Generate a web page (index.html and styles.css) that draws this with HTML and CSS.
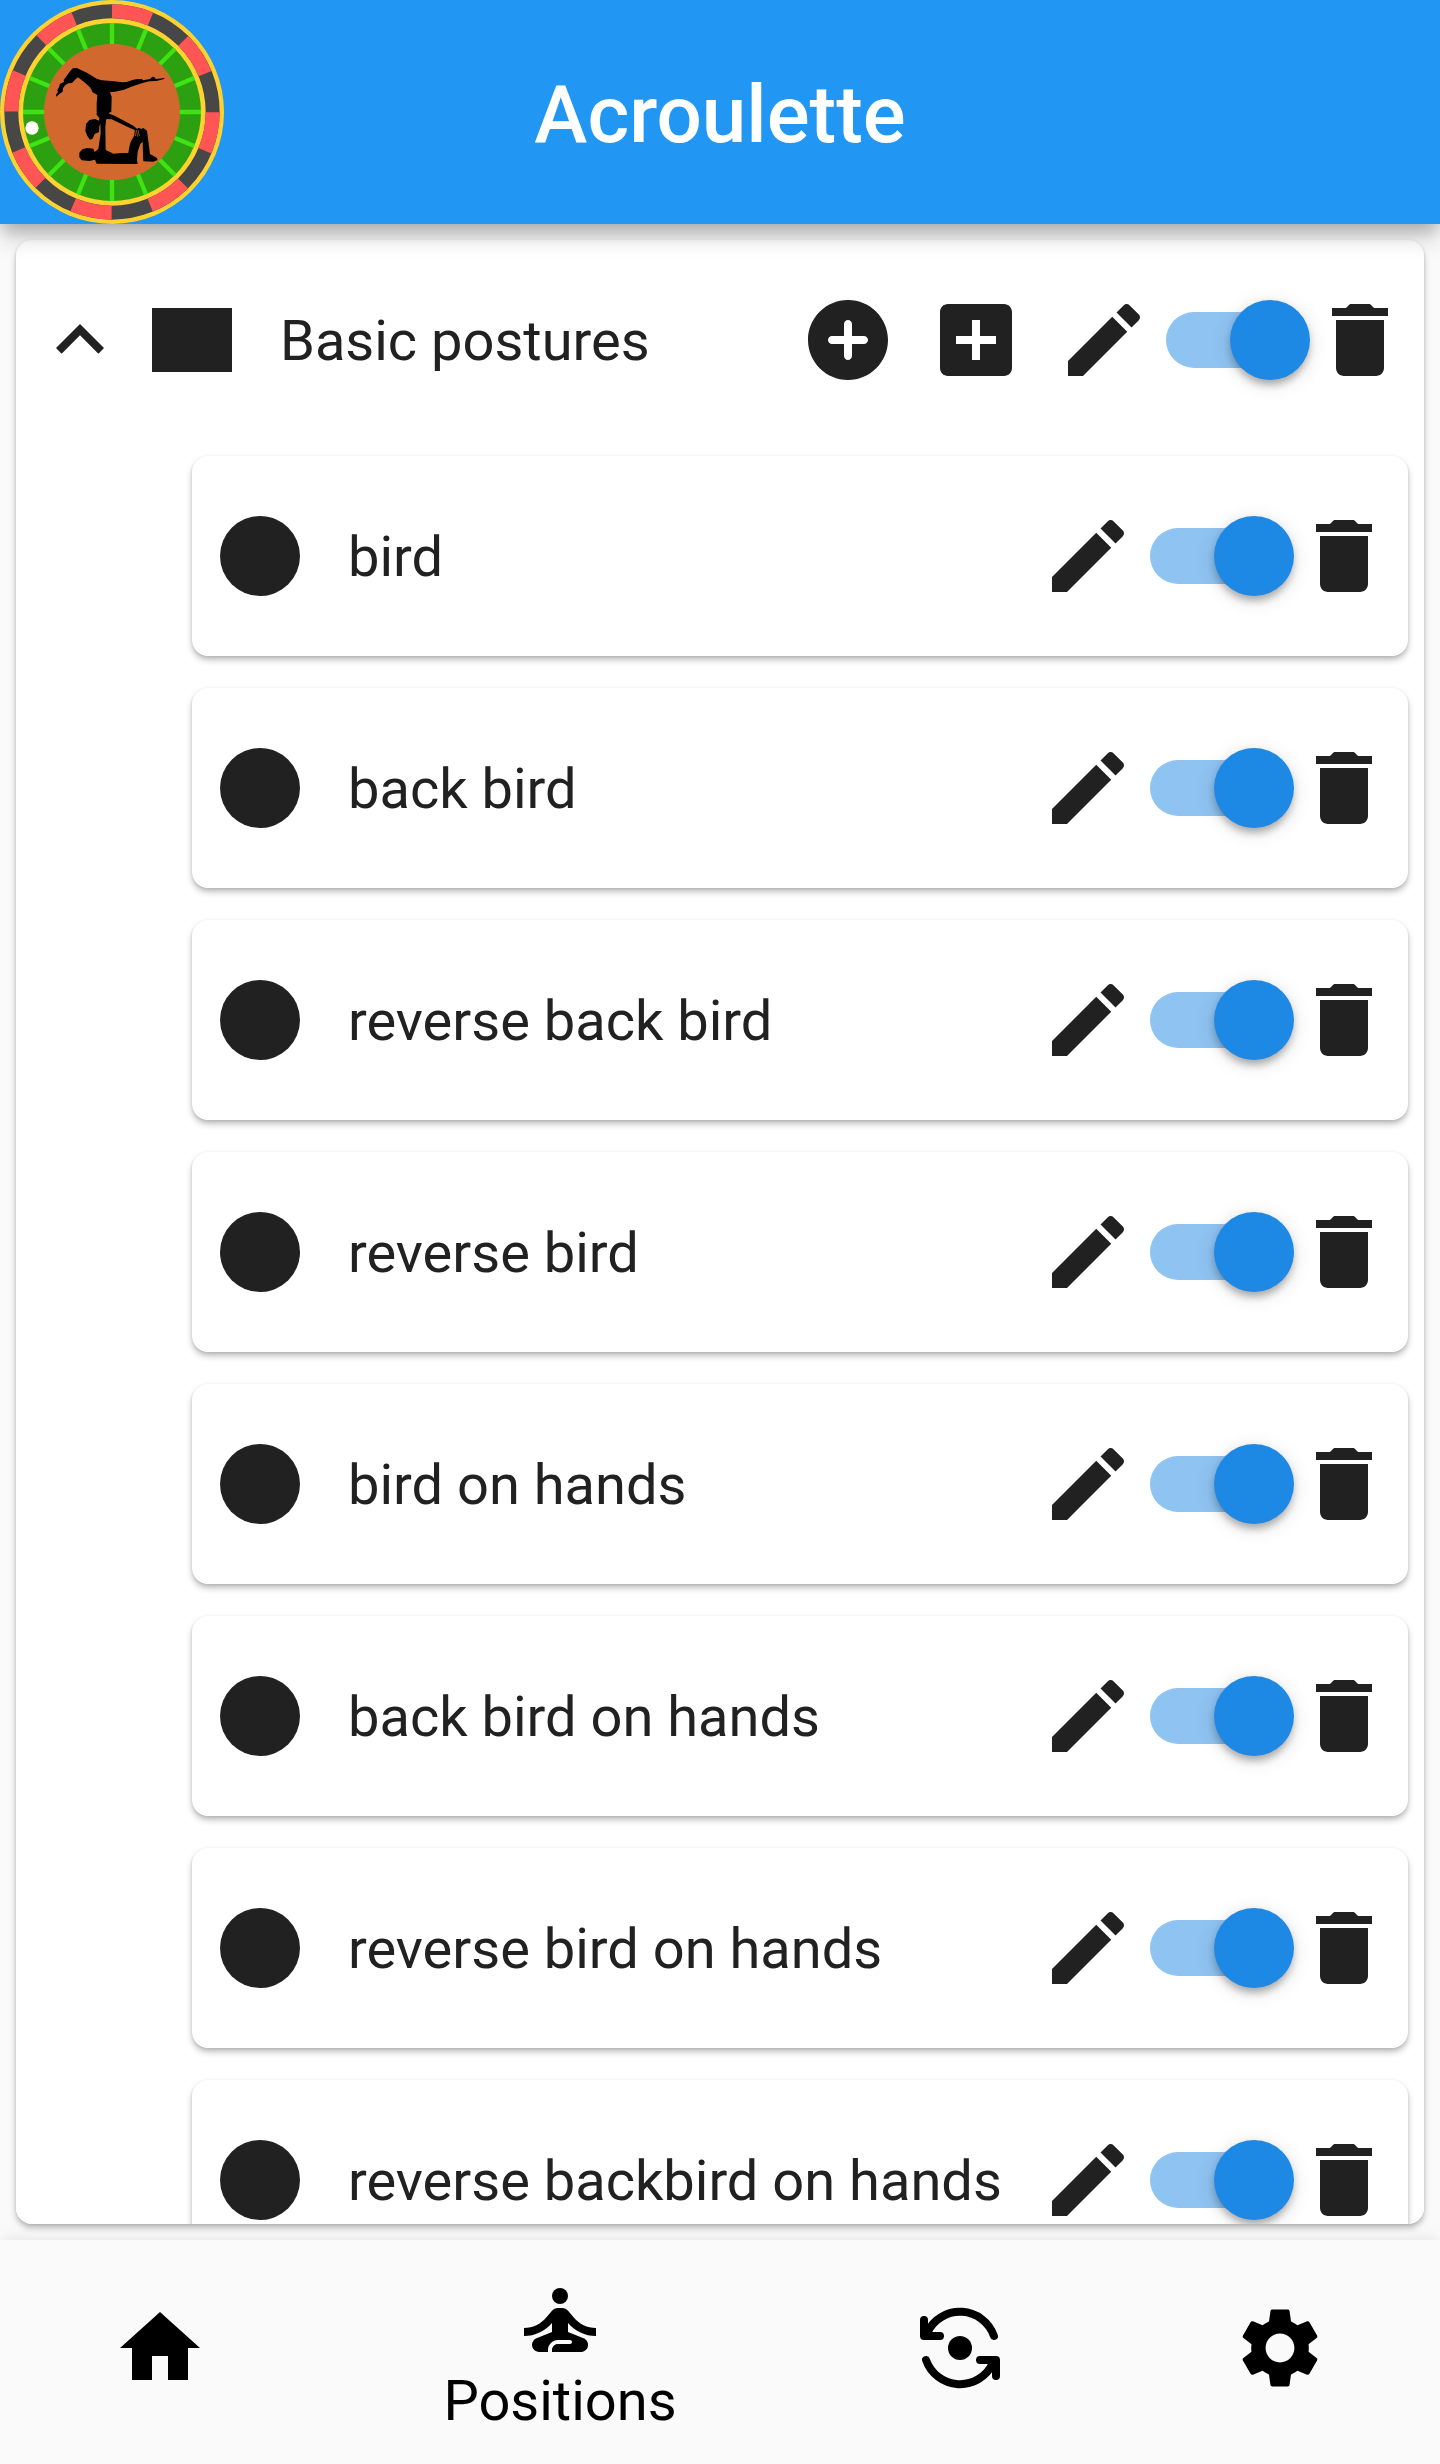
FILE: index.html
```html
<!DOCTYPE html>
<html lang="en">
<head>
<meta charset="utf-8">
<meta name="viewport" content="width=device-width, initial-scale=1">
<title>Acroulette</title>
<link rel="stylesheet" href="styles.css">
</head>
<body>
<svg class="sprite" aria-hidden="true">
  <symbol id="i-less" viewBox="0 0 24 24"><path d="M12 8l-6 6 1.41 1.41L12 10.83l4.59 4.58L18 14z"/></symbol>
  <symbol id="i-rect" viewBox="0 0 24 24"><path d="M2 4h20v16H2z"/></symbol>
  <symbol id="i-circle" viewBox="0 0 24 24"><circle cx="12" cy="12" r="10"/></symbol>
  <symbol id="i-add-circle" viewBox="0 0 24 24"><path d="M12 2C6.48 2 2 6.48 2 12s4.48 10 10 10 10-4.48 10-10S17.52 2 12 2zm4 11h-3v3c0 .55-.45 1-1 1s-1-.45-1-1v-3H8c-.55 0-1-.45-1-1s.45-1 1-1h3V8c0-.55.45-1 1-1s1 .45 1 1v3h3c.55 0 1 .45 1 1s-.45 1-1 1z"/></symbol>
  <symbol id="i-add-box" viewBox="0 0 24 24"><path d="M19 3H5c-1.11 0-2 .9-2 2v14c0 1.1.89 2 2 2h14c1.1 0 2-.9 2-2V5c0-1.1-.9-2-2-2zm-2 10h-4v4h-2v-4H7v-2h4V7h2v4h4v2z"/></symbol>
  <symbol id="i-edit" viewBox="0 0 24 24"><path d="M3 17.25V21h3.75L17.81 9.94l-3.75-3.75L3 17.25zM20.71 7.04c.39-.39.39-1.02 0-1.41l-2.34-2.34c-.39-.39-1.02-.39-1.41 0l-1.83 1.83 3.75 3.75 1.83-1.83z"/></symbol>
  <symbol id="i-delete" viewBox="0 0 24 24"><path d="M6 19c0 1.1.9 2 2 2h8c1.1 0 2-.9 2-2V7H6v12zM19 4h-3.5l-1-1h-5l-1 1H5v2h14V4z"/></symbol>
</svg>

<header class="app-bar">
  <svg class="logo" viewBox="0 0 672 672" role="img" aria-label="Acroulette logo">
    <circle cx="336" cy="336" r="336" fill="#ffd32f"/>
    <circle cx="336" cy="336" r="302" fill="none" stroke="#474747" stroke-width="42"/>
    <circle cx="336" cy="336" r="302" fill="none" stroke="#ff5555" stroke-width="42" pathLength="16" stroke-dasharray="1 1" transform="rotate(-90 336 336)"/>
    <circle cx="336" cy="336" r="267" fill="#2ca010"/>
    <g stroke="#3fe314" stroke-width="13">
      <path id="spokes" d="M336 69v534M69 336h534"/>
      <use href="#spokes" transform="rotate(22.5 336 336)"/>
      <use href="#spokes" transform="rotate(45 336 336)"/>
      <use href="#spokes" transform="rotate(67.5 336 336)"/>
    </g>
    <circle cx="336" cy="336" r="204" fill="#d1692f"/>
    <circle cx="96" cy="384" r="20" fill="#fff"/>
    <path fill-rule="evenodd" d="M169 290L168 284 174 276 172 270 177 262 180 251 192 246 191 240 197 232 213 210 220 204 232 205 262 219 290 236 305 241 335 243 368 247 380 246 400 239 414 237 425 237 430 241 450 237 457 230 463 231 467 237 494 234 492 237 470 243 448 244 430 248 400 258 372 269 345 275 330 277 335 290 334 335 325 340 345 348 372 362 400 377 411 386 418 383 423 387 430 384 441 392 446 430 450 462 470 473 473 480 460 485 430 484 429 465 428 425 421 432 413 455 411 480 413 492 290 491 285 479 268 483 245 481 238 472 238 458 247 448 262 444 280 446 284 456 295 447 299 420 302 400 301 370 298 380 297 396 284 402 278 416 270 419 262 408 256 393 258 372 268 360 285 357 297 362 298 354 290 345 290 310 292 285 278 277 270 262 255 248 234 232 225 239 216 249 205 250 195 256 189 265 188 275 178 282ZM319 357L316 380 317 450 330 456 340 461 365 459 385 459 388 440 392 426 402 408 404 390 385 382 360 370 335 358Z"/>
    <path d="M404 392l3 16M409 390l4 20M414 390l4 18" stroke="#d1692f" stroke-width="2" fill="none"/>
  </svg>
  <h1 class="title">Acroulette</h1>
</header>

<main class="panel">
  <div class="row group">
    <button class="icon-btn" aria-label="Collapse"><svg class="icon"><use href="#i-less"/></svg></button>
    <svg class="icon"><use href="#i-rect"/></svg>
    <h2 class="name">Basic postures</h2>
    <div class="adders">
      <button class="icon-btn" aria-label="Add posture"><svg class="icon"><use href="#i-add-circle"/></svg></button>
      <button class="icon-btn" aria-label="Add category"><svg class="icon"><use href="#i-add-box"/></svg></button>
    </div>
    <button class="icon-btn" aria-label="Edit"><svg class="icon"><use href="#i-edit"/></svg></button>
    <input class="switch" type="checkbox" role="switch" aria-label="Basic postures" checked>
    <button class="icon-btn" aria-label="Delete"><svg class="icon"><use href="#i-delete"/></svg></button>
  </div>
  <ul class="list">
    <li class="row card">
      <svg class="icon"><use href="#i-circle"/></svg><label class="name" for="p1">bird</label>
      <button class="icon-btn" aria-label="Edit"><svg class="icon"><use href="#i-edit"/></svg></button>
      <input class="switch" id="p1" type="checkbox" role="switch" checked>
      <button class="icon-btn" aria-label="Delete"><svg class="icon"><use href="#i-delete"/></svg></button>
    </li>
    <li class="row card">
      <svg class="icon"><use href="#i-circle"/></svg><label class="name" for="p2">back bird</label>
      <button class="icon-btn" aria-label="Edit"><svg class="icon"><use href="#i-edit"/></svg></button>
      <input class="switch" id="p2" type="checkbox" role="switch" checked>
      <button class="icon-btn" aria-label="Delete"><svg class="icon"><use href="#i-delete"/></svg></button>
    </li>
    <li class="row card">
      <svg class="icon"><use href="#i-circle"/></svg><label class="name" for="p3">reverse back bird</label>
      <button class="icon-btn" aria-label="Edit"><svg class="icon"><use href="#i-edit"/></svg></button>
      <input class="switch" id="p3" type="checkbox" role="switch" checked>
      <button class="icon-btn" aria-label="Delete"><svg class="icon"><use href="#i-delete"/></svg></button>
    </li>
    <li class="row card">
      <svg class="icon"><use href="#i-circle"/></svg><label class="name" for="p4">reverse bird</label>
      <button class="icon-btn" aria-label="Edit"><svg class="icon"><use href="#i-edit"/></svg></button>
      <input class="switch" id="p4" type="checkbox" role="switch" checked>
      <button class="icon-btn" aria-label="Delete"><svg class="icon"><use href="#i-delete"/></svg></button>
    </li>
    <li class="row card">
      <svg class="icon"><use href="#i-circle"/></svg><label class="name" for="p5">bird on hands</label>
      <button class="icon-btn" aria-label="Edit"><svg class="icon"><use href="#i-edit"/></svg></button>
      <input class="switch" id="p5" type="checkbox" role="switch" checked>
      <button class="icon-btn" aria-label="Delete"><svg class="icon"><use href="#i-delete"/></svg></button>
    </li>
    <li class="row card">
      <svg class="icon"><use href="#i-circle"/></svg><label class="name" for="p6">back bird on hands</label>
      <button class="icon-btn" aria-label="Edit"><svg class="icon"><use href="#i-edit"/></svg></button>
      <input class="switch" id="p6" type="checkbox" role="switch" checked>
      <button class="icon-btn" aria-label="Delete"><svg class="icon"><use href="#i-delete"/></svg></button>
    </li>
    <li class="row card">
      <svg class="icon"><use href="#i-circle"/></svg><label class="name" for="p7">reverse bird on hands</label>
      <button class="icon-btn" aria-label="Edit"><svg class="icon"><use href="#i-edit"/></svg></button>
      <input class="switch" id="p7" type="checkbox" role="switch" checked>
      <button class="icon-btn" aria-label="Delete"><svg class="icon"><use href="#i-delete"/></svg></button>
    </li>
    <li class="row card">
      <svg class="icon"><use href="#i-circle"/></svg><label class="name" for="p8">reverse backbird on hands</label>
      <button class="icon-btn" aria-label="Edit"><svg class="icon"><use href="#i-edit"/></svg></button>
      <input class="switch" id="p8" type="checkbox" role="switch" checked>
      <button class="icon-btn" aria-label="Delete"><svg class="icon"><use href="#i-delete"/></svg></button>
    </li>
  </ul>
</main>

<nav class="tabs" aria-label="Main">
  <a class="tab" href="#home" aria-label="Home">
    <svg class="icon" viewBox="0 0 24 24"><path d="M10 20v-6h4v6h5v-8h3L12 3 2 12h3v8z"/></svg>
  </a>
  <a class="tab active" href="#positions" aria-current="page">
    <svg class="icon" viewBox="0 0 24 24"><circle cx="12" cy="6" r="2"/><path d="M21,16v-2c-2.24,0-4.16-0.96-5.6-2.68l-1.34-1.6C13.68,9.26,13.12,9,12.53,9h-1.05c-0.59,0-1.15,0.26-1.53,0.72l-1.34,1.6C7.16,13.04,5.24,14,3,14v2c2.77,0,5.19-1.17,7-3.25V15l-3.88,1.55C5.45,16.82,5,17.48,5,18.21C5,19.2,5.8,20,6.79,20H9v-0.5c0-1.38,1.12-2.5,2.5-2.5h3c0.28,0,0.5,0.22,0.5,0.5S14.78,18,14.5,18h-3c-0.83,0-1.5,0.67-1.5,1.5V20h7.1c0.85,0,1.65-0.5,1.86-1.32c0.23-0.91-0.24-1.78-1.07-2.12L14,15v-2.25C15.81,14.83,18.23,16,21,16z"/></svg>
    <span>Positions</span>
  </a>
  <a class="tab" href="#transitions" aria-label="Transitions">
    <svg class="icon" viewBox="0 0 24 24"><circle cx="12" cy="12" r="3"/><path d="M20.49 9A9 9 0 0 0 3.9 8M3 5v4h4M3.51 15a9 9 0 0 0 16.59 1M17 15h4v4" fill="none" stroke="currentColor" stroke-width="2" stroke-linecap="round" stroke-linejoin="round"/></svg>
  </a>
  <a class="tab" href="#settings" aria-label="Settings">
    <svg class="icon" viewBox="0 0 24 24"><path d="M19.14 12.94c.04-.3.06-.61.06-.94 0-.32-.02-.64-.07-.94l2.03-1.58c.18-.14.23-.41.12-.61l-1.92-3.32c-.12-.22-.37-.29-.59-.22l-2.39.96c-.5-.38-1.03-.7-1.62-.94l-.36-2.54c-.04-.24-.24-.41-.48-.41h-3.84c-.24 0-.43.17-.47.41l-.36 2.54c-.59.24-1.13.57-1.62.94l-2.39-.96c-.22-.08-.47 0-.59.22L2.74 8.87c-.12.21-.08.47.12.61l2.03 1.58c-.05.3-.09.63-.09.94s.02.64.07.94l-2.03 1.58c-.18.14-.23.41-.12.61l1.92 3.32c.12.22.37.29.59.22l2.39-.96c.5.38 1.03.7 1.62.94l.36 2.54c.05.24.24.41.48.41h3.84c.24 0 .44-.17.47-.41l.36-2.54c.59-.24 1.13-.56 1.62-.94l2.39.96c.22.08.47 0 .59-.22l1.92-3.32c.12-.22.07-.47-.12-.61l-2.01-1.58zM12 15.6c-1.98 0-3.6-1.62-3.6-3.6s1.62-3.6 3.6-3.6 3.6 1.62 3.6 3.6-1.62 3.6-3.6 3.6z"/></svg>
  </a>
</nav>
</body>
</html>
```
FILE: styles.css
```css
* { box-sizing: border-box; margin: 0; }

body {
  display: flex;
  flex-direction: column;
  height: 100vh;
  background: #fafafa;
  color: #212121;
  font: 400 56px/66px Roboto, sans-serif;
}

.sprite { display: none; }

.icon {
  display: block;
  flex: none;
  width: 96px;
  height: 96px;
  fill: currentColor;
}

.icon-btn {
  flex: none;
  padding: 0;
  border: 0;
  background: none;
  color: inherit;
  cursor: pointer;
}

.app-bar {
  position: relative;
  z-index: 1;
  flex: none;
  display: grid;
  grid-template-columns: 224px 1fr 224px;
  align-items: center;
  height: 224px;
  background: #2196f3;
  color: #fff;
  box-shadow: 0 8px 16px -4px rgba(0, 0, 0, .2), 0 16px 20px 0 rgba(0, 0, 0, .14), 0 4px 24px 0 rgba(0, 0, 0, .08);
}

.logo { display: block; width: 224px; height: 224px; }

.title {
  padding-top: 6px;
  font-size: 80px;
  font-weight: 500;
  line-height: 96px;
  text-align: center;
}

.panel {
  flex: 1;
  min-height: 0;
  margin: 16px;
  overflow-y: auto;
  scrollbar-width: none;
  border-radius: 16px;
  background: #fff;
  box-shadow: 0 4px 6px rgba(0, 0, 0, .25), 0 1px 3px rgba(0, 0, 0, .1);
}

.row {
  display: flex;
  align-items: center;
  height: 200px;
  padding-right: 16px;
}

.group { padding-left: 16px; }
.group > .icon { margin-left: 16px; }
.adders { display: flex; gap: 32px; margin-right: 32px; }

.name {
  flex: 1;
  min-width: 0;
  margin-left: 40px;
  padding-top: 2px;
  font-size: 56px;
  font-weight: 400;
  white-space: nowrap;
}

.list {
  display: grid;
  gap: 32px;
  padding: 16px 16px 16px 176px;
  list-style: none;
}

.card {
  padding-left: 20px;
  border-radius: 16px;
  background: #fff;
  box-shadow: 0 4px 6px rgba(0, 0, 0, .25), 0 1px 3px rgba(0, 0, 0, .1);
}

.switch {
  appearance: none;
  flex: none;
  display: grid;
  align-items: center;
  width: 160px;
  height: 96px;
  margin: 0;
  cursor: pointer;
}

.switch::before,
.switch::after { content: ""; grid-area: 1 / 1; }

.switch::before {
  width: 132px;
  height: 56px;
  margin-left: 14px;
  border-radius: 28px;
  background: #8fc3f2;
}

.switch::after {
  width: 80px;
  height: 80px;
  margin-left: 14px;
  border-radius: 50%;
  background: #fafafa;
  box-shadow: 0 8px 8px -4px rgba(0, 0, 0, .2), 0 4px 8px rgba(0, 0, 0, .14), 0 4px 20px rgba(0, 0, 0, .12);
}

.switch:checked::after { margin-left: 78px; background: #1e88e5; }

.tabs {
  position: relative;
  flex: none;
  display: grid;
  grid-template-columns: 2fr 3fr 2fr 2fr;
  height: 224px;
  background: #fafafa;
  box-shadow: 0 0 16px rgba(0, 0, 0, .1);
}

.tab {
  display: flex;
  flex-direction: column;
  align-items: center;
  justify-content: center;
  padding-bottom: 8px;
  color: #000;
  text-decoration: none;
}

.tab.active { padding: 2px 0 0; }
```
